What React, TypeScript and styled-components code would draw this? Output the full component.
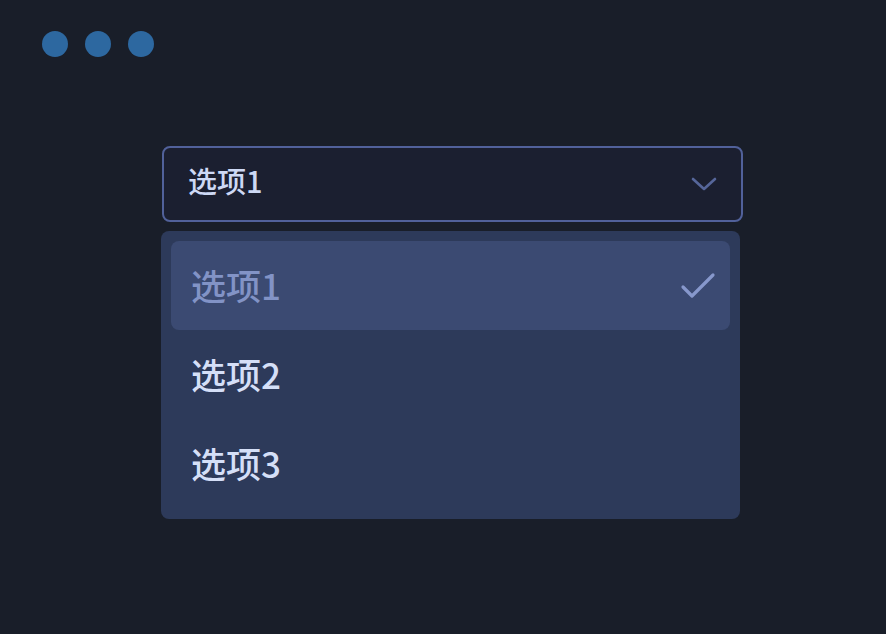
import { useState } from 'react';
import styled, { createGlobalStyle } from 'styled-components';

const GlobalStyle = createGlobalStyle`
  html, body {
    margin: 0;
    padding: 0;
    background: #191e29;
  }
  body {
    font-family: "Noto Sans CJK SC", "Noto Sans", sans-serif;
  }
`;

const Page = styled.div`
  width: 886px;
  height: 634px;
  background: #191e29;
  overflow: hidden;
  display: flex;
  flex-direction: column;
`;

const TitleBar = styled.div`
  display: flex;
  gap: 17px;
  padding: 31px 0 0 42px;
`;

const Dot = styled.span`
  width: 26px;
  height: 26px;
  border-radius: 50%;
  background: #2d68a0;
`;

const SelectWrap = styled.div`
  margin: 89px 0 0 162px;
  width: 581px;
  display: flex;
  flex-direction: column;
  gap: 9px;
`;

const Trigger = styled.button`
  height: 76px;
  box-sizing: border-box;
  border: 2px solid #51619a;
  border-radius: 8px;
  background: #1b1f30;
  color: #cdd8f4;
  font-family: inherit;
  font-size: 29px;
  font-weight: 500;
  display: flex;
  align-items: center;
  justify-content: space-between;
  padding: 0 24px 0 24px;
  cursor: pointer;
`;

const TriggerLabel = styled.span`
  margin-bottom: 8px;
`;

const Panel = styled.ul`
  list-style: none;
  margin: 0 0 0 -1px;
  width: 579px;
  box-sizing: border-box;
  padding: 10px 10px 11px;
  border-radius: 8px;
  background: #2d3a5a;
  display: flex;
  flex-direction: column;
`;

const Item = styled.li<{ $selected: boolean }>`
  height: 89px;
  border-radius: 8px;
  padding: 0 14px 0 20px;
  display: flex;
  align-items: center;
  justify-content: space-between;
  font-size: 35px;
  font-weight: 500;
  background: ${({ $selected }) => ($selected ? '#3b4a72' : 'transparent')};
  color: ${({ $selected }) => ($selected ? '#8293c6' : '#d5dff7')};
  cursor: pointer;
`;

const ItemLabel = styled.span`
  margin-bottom: 2px;
`;

const options = ['选项1', '选项2', '选项3'];

export default function App() {
  const [value, setValue] = useState(options[0]);

  return (
    <Page>
      <GlobalStyle />
      <TitleBar>
        <Dot />
        <Dot />
        <Dot />
      </TitleBar>
      <SelectWrap>
        <Trigger type="button">
          <TriggerLabel>{value}</TriggerLabel>
          <svg width="26" height="16" viewBox="0 0 26 16" fill="none" aria-hidden="true">
            <path d="M2 3l11 10L24 3" stroke="#56669a" strokeWidth="2.6" strokeLinecap="round" strokeLinejoin="round" />
          </svg>
        </Trigger>
        <Panel role="listbox">
          {options.map((opt) => (
            <Item key={opt} $selected={opt === value} onClick={() => setValue(opt)}>
              <ItemLabel>{opt}</ItemLabel>
              {opt === value && (
                <svg width="36" height="28" viewBox="0 0 36 28" fill="none" aria-hidden="true">
                  <path d="M3 15l9 9L33 3" stroke="#8798cc" strokeWidth="3.2" strokeLinecap="round" strokeLinejoin="round" />
                </svg>
              )}
            </Item>
          ))}
        </Panel>
      </SelectWrap>
    </Page>
  );
}
